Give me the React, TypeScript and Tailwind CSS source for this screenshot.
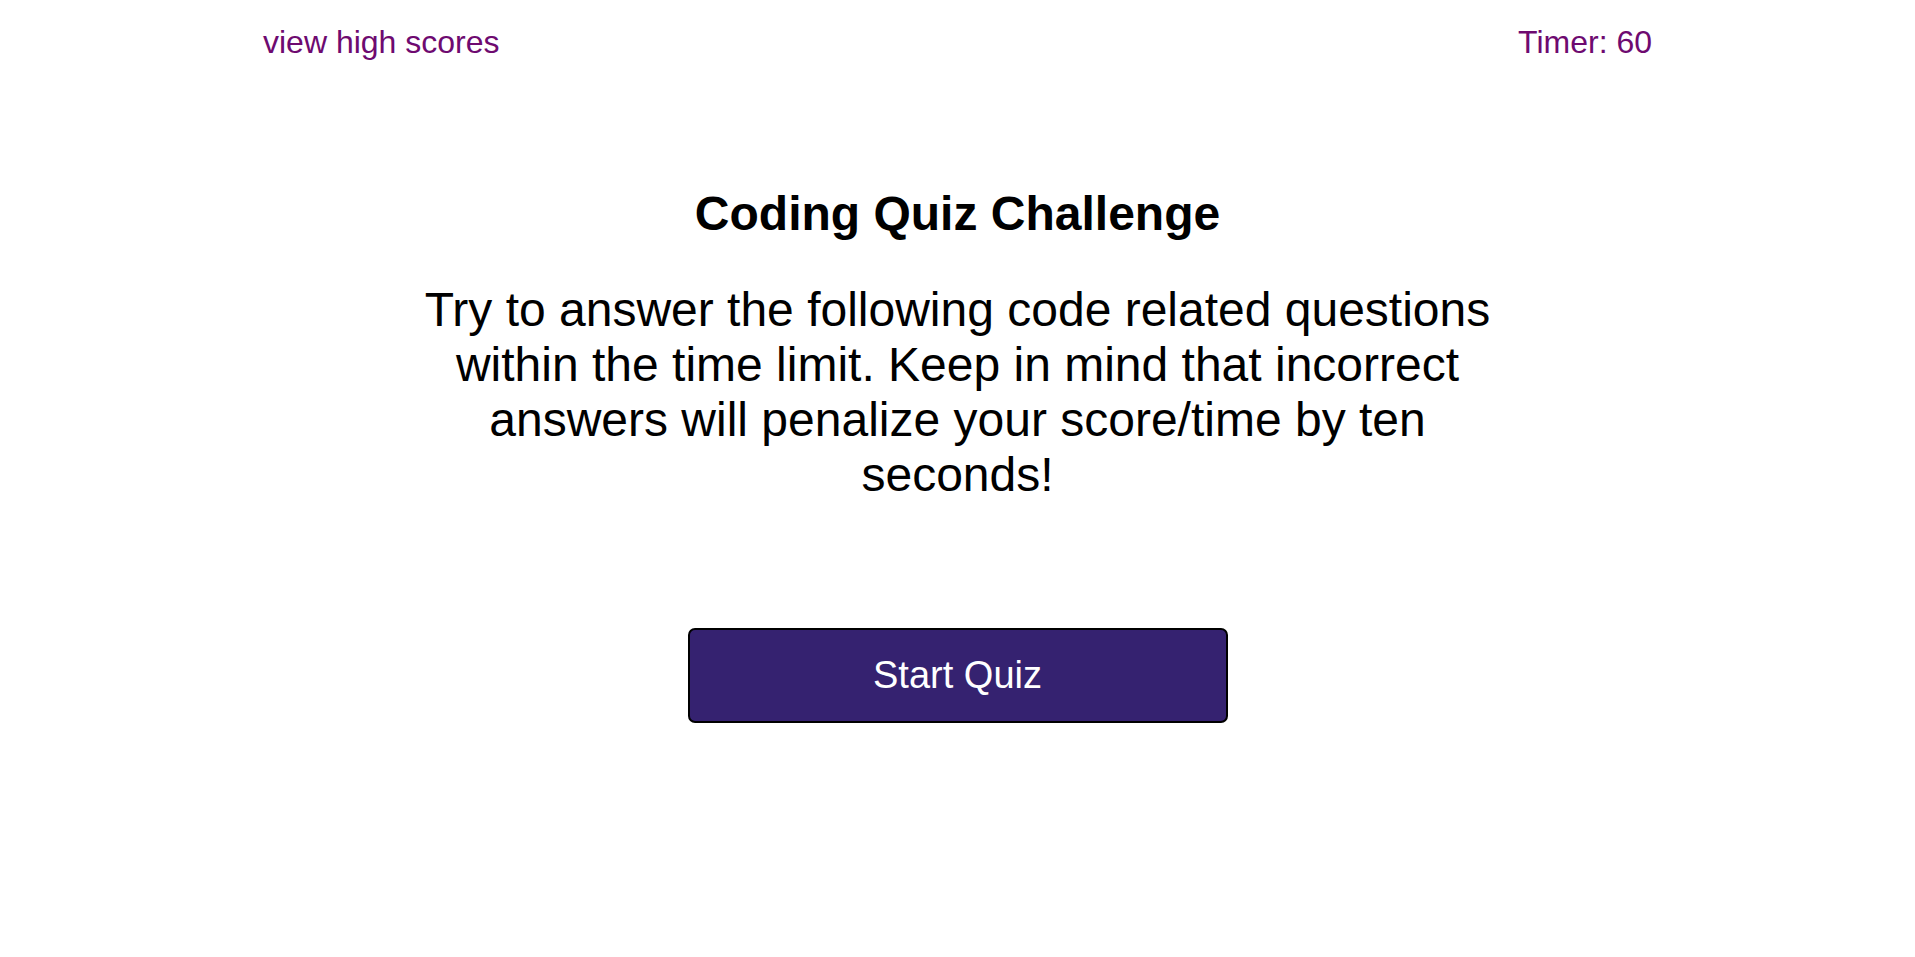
export default function App() {
    return (
        <div className="min-h-screen bg-white text-black font-['Liberation_Sans',Arial,sans-serif]">
            <header className="mx-auto flex w-[1389px] items-center justify-between pt-[24px] text-[32px] leading-[37px] text-[#6e0a70]">
                <a href="#">view high scores</a>
                <span>Timer: 60</span>
            </header>

            <main className="flex flex-col items-center text-center">
                <h1 className="mt-[125px] text-[48px] font-bold leading-[55px]">Coding Quiz Challenge</h1>
                <p className="mt-[41px] w-[1100px] text-[48px] leading-[55px]">
                    Try to answer the following code related questions within the time limit. Keep in mind that
                    incorrect answers will penalize your score/time by ten seconds!
                </p>
                <button className="mt-[126px] h-[95px] w-[540px] rounded-[7px] border-2 border-black bg-[#352270] text-[38px] text-white">
                    Start Quiz
                </button>
            </main>
        </div>
    );
}
